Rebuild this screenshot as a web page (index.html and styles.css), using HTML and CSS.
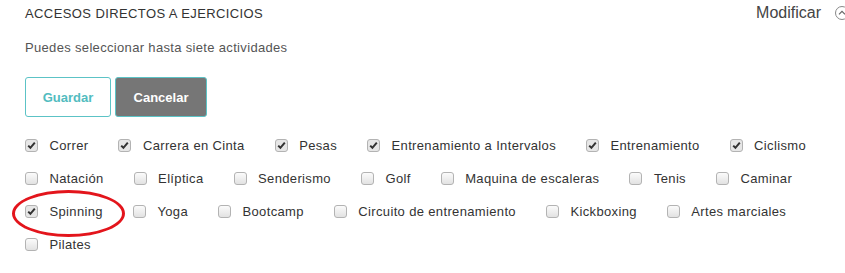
FILE: index.html
```html
<!DOCTYPE html>
<html lang="es">
<head>
    <meta charset="UTF-8">
    <meta name="viewport" content="width=device-width, initial-scale=1.0">
    <title>Accesos directos</title>
    <link rel="stylesheet" href="styles.css">
</head>
<body>
    <div class="panel">
        <div class="header">
            <h2 class="title">ACCESOS DIRECTOS A EJERCICIOS</h2>
            <a class="modify" href="#">Modificar
                <svg width="16" height="16" viewBox="0 0 16 16">
                    <circle cx="8" cy="8" r="6.5" fill="none" stroke="#888" stroke-width="1"/>
                    <path d="M5 9.3 L8 6.3 L11 9.3" fill="none" stroke="#666" stroke-width="1.2"/>
                </svg>
            </a>
        </div>

        <p class="hint">Puedes seleccionar hasta siete actividades</p>

        <div class="actions">
            <button class="btn btn-save">Guardar</button>
            <button class="btn btn-cancel">Cancelar</button>
        </div>

        <div class="options">
            <label class="option checked"><span class="box"></span>Correr</label>
            <label class="option checked"><span class="box"></span>Carrera en Cinta</label>
            <label class="option checked"><span class="box"></span>Pesas</label>
            <label class="option checked"><span class="box"></span>Entrenamiento a Intervalos</label>
            <label class="option checked"><span class="box"></span>Entrenamiento</label>
            <label class="option checked"><span class="box"></span>Ciclismo</label>

            <label class="option"><span class="box"></span>Natación</label>
            <label class="option"><span class="box"></span>Elíptica</label>
            <label class="option"><span class="box"></span>Senderismo</label>
            <label class="option"><span class="box"></span>Golf</label>
            <label class="option"><span class="box"></span>Maquina de escaleras</label>
            <label class="option"><span class="box"></span>Tenis</label>
            <label class="option"><span class="box"></span>Caminar</label>

            <label class="option checked circled"><span class="box"></span>Spinning</label>
            <label class="option"><span class="box"></span>Yoga</label>
            <label class="option"><span class="box"></span>Bootcamp</label>
            <label class="option"><span class="box"></span>Circuito de entrenamiento</label>
            <label class="option"><span class="box"></span>Kickboxing</label>
            <label class="option"><span class="box"></span>Artes marciales</label>

            <label class="option"><span class="box"></span>Pilates</label>
        </div>
    </div>
</body>
</html>
```

FILE: styles.css
```css
* {
    margin: 0;
    padding: 0;
    box-sizing: border-box;
}

body {
    font-family: "Liberation Sans", Arial, sans-serif;
    background-color: #fff;
    color: #333;
    overflow: hidden;
}

.panel {
    padding-left: 25px;
}

.header {
    display: flex;
    justify-content: space-between;
    align-items: center;
    height: 26px;
}

.title {
    font-size: 13px;
    font-weight: normal;
    letter-spacing: 0.4px;
    color: #333;
}

.modify {
    display: flex;
    align-items: center;
    gap: 13px;
    margin-right: -5px;
    font-size: 16px;
    color: #444;
    text-decoration: none;
}

.hint {
    margin-top: 14px;
    font-size: 13px;
    line-height: 16px;
    letter-spacing: 0.33px;
    color: #555;
}

.actions {
    display: flex;
    gap: 5px;
    margin-top: 21px;
}

.btn {
    height: 40px;
    border: 1px solid #5cc3c6;
    border-radius: 3px;
    font-family: Arial, "Liberation Sans", sans-serif;
    font-size: 13px;
    font-weight: bold;
    cursor: pointer;
}

.btn-save {
    width: 86px;
    background-color: #fff;
    color: #52bcc0;
}

.btn-cancel {
    width: 92px;
    margin-left: -1px;
    background-color: #767676;
    color: #fff;
}

.options {
    display: flex;
    flex-wrap: wrap;
    column-gap: 30px;
    row-gap: 13px;
    margin-top: 18px;
}

.option {
    position: relative;
    display: flex;
    align-items: center;
    gap: 11.5px;
    height: 20px;
    font-size: 13px;
    letter-spacing: 0.35px;
    color: #333;
}

.box {
    width: 13px;
    height: 13px;
    border: 1px solid #b3b3b3;
    border-radius: 3px;
    background: linear-gradient(#fbfbfb, #e2e2e2);
}

.checked .box {
    background: url("data:image/svg+xml;utf8,<svg xmlns='http://www.w3.org/2000/svg' width='11' height='11'><path d='M2.2 5.6 L4.4 7.8 L8.8 2.6' fill='none' stroke='%23333' stroke-width='2'/></svg>") no-repeat center;
    background-color: #e6e6e6;
}

/* red hand-drawn circle round Spinning */
.circled::after {
    content: "";
    position: absolute;
    left: -13px;
    top: -11px;
    width: 107px;
    height: 41px;
    border: 3px solid #e3151c;
    border-radius: 50%;
}
```
